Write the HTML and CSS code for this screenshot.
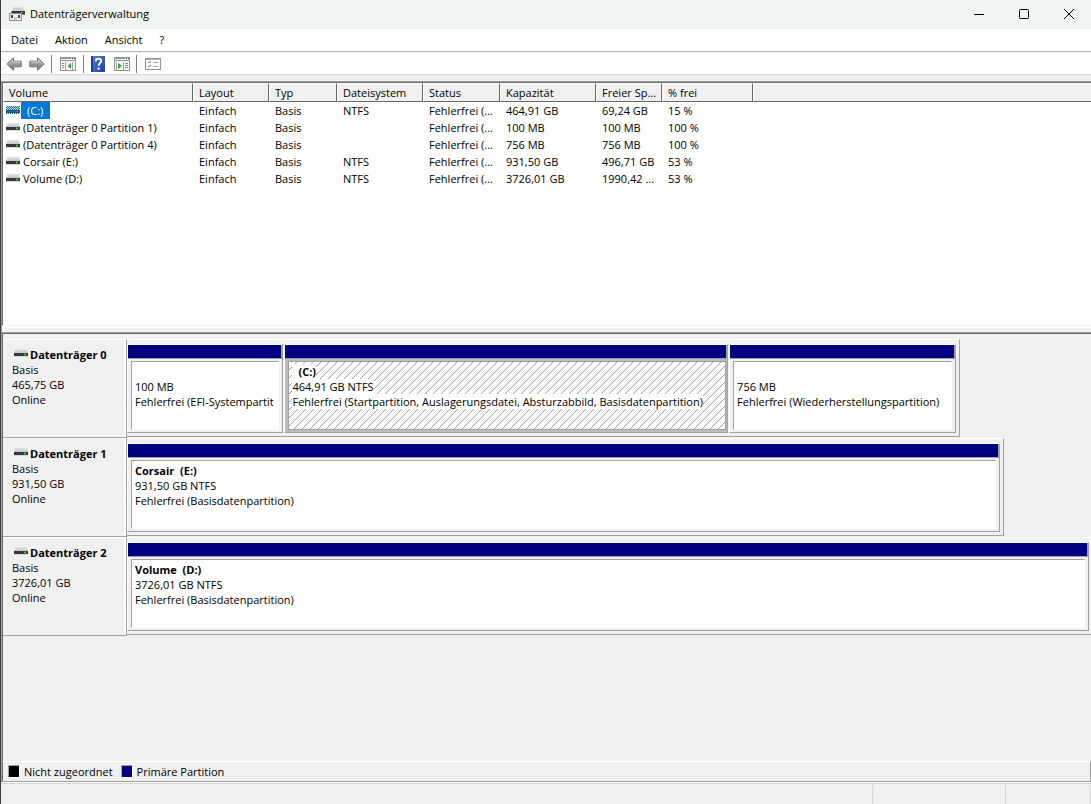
FILE: index.html
```html
<!DOCTYPE html>
<html lang="de">
<head>
<meta charset="utf-8">
<title>Datenträgerverwaltung</title>
<link rel="stylesheet" href="styles.css">
</head>
<body>
<svg class="defs" aria-hidden="true">
  <defs>
    <linearGradient id="lid" x1="0" y1="0" x2="0" y2="1"><stop offset="0" stop-color="#e2e4e6"/><stop offset="1" stop-color="#c3c6c9"/></linearGradient>
    <linearGradient id="arrow-fill" x1="0" y1="0" x2="0" y2="1"><stop offset="0" stop-color="#bdbdbd"/><stop offset="1" stop-color="#777"/></linearGradient>
    <linearGradient id="help-fill" x1="0" y1="0" x2="1" y2="1"><stop offset="0" stop-color="#5f7fdc"/><stop offset="1" stop-color="#1c3fa8"/></linearGradient>
    <symbol id="drive" viewBox="0 0 14 9"><path d="M1 0h12l1 4H0z" fill="url(#lid)"/><path d="M0 4h14v3H0z" fill="#36393b"/><path d="M0 7h14v1H0z" fill="#dadada"/><path d="M10 4h2v3h-2z" fill="#1d7a2c"/><path d="M10 5h2v1h-2z" fill="#2fe04a"/></symbol>
    <symbol id="drive-selected" viewBox="0 0 14 9"><g shape-rendering="crispEdges"><path d="M1 0h12v4H1z" fill="#c8d6e2"/><path d="M0 4h14v3H0z" fill="#30383f"/><path d="M10 5h2v1h-2z" fill="#2fc070"/><path d="M1 .5h13M0 1.500h13M1 2.500h13M0 3.500h13M1 4.500h13M0 5.500h13M1 6.500h13M0 7.500h13" stroke="#0078d7" stroke-dasharray="1 1"/></g></symbol>
    <symbol id="arrow" viewBox="0 0 16 14"><path d="M.8 7 7.500.8v3.400h7.700v5.600H7.500v3.400z" fill="url(#arrow-fill)" stroke="#747474"/><path d="M2.500 7 6.500 3.200v2h7.700" fill="none" stroke="#d2d2d2"/></symbol>
  </defs>
</svg>
<div class="window">
  <header class="titlebar">
    <svg class="app-icon" viewBox="0 0 16 14"><path d="M4 .5h10L15.500 4H2.500z" fill="#cfd2d4"/><path d="M2.500 4H16v3.500H2.500z" fill="#333"/><path d="M12 5h2v1h-2z" fill="#35d04d"/><path d="M.5 6.500h12v7H.5z" fill="#ececec" stroke="#8f8f8f"/><path d="M2 8h2v3H2zM9 8h2v3H9z" fill="#444"/><path d="M5 10h3v3H5z" fill="#d9c9c4"/></svg>
    <h1 class="title">Datenträgerverwaltung</h1>
    <div class="caption-buttons">
      <button class="caption" aria-label="Minimieren"><svg viewBox="0 0 12 12"><path d="M1 6.500h10"/></svg></button>
      <button class="caption" aria-label="Maximieren"><svg viewBox="0 0 12 12"><rect x="1.500" y="1.500" width="9" height="9" rx="1"/></svg></button>
      <button class="caption" aria-label="Schließen"><svg viewBox="0 0 12 12"><path d="m1 1 10 10M11 1 1 11"/></svg></button>
    </div>
  </header>
  <nav class="menubar">
    <button class="menu">Datei</button><button class="menu">Aktion</button><button class="menu">Ansicht</button><button class="menu">?</button>
  </nav>
  <div class="toolbar" role="toolbar">
    <button class="tool nav" aria-label="Zurück"><svg class="ic-arrow"><use href="#arrow"/></svg></button>
    <button class="tool nav" aria-label="Vor"><svg class="ic-arrow forward"><use href="#arrow"/></svg></button>
    <span class="tool-sep"></span>
    <button class="tool wide" aria-label="Konsolenstruktur einblenden"><svg class="ic" viewBox="0 0 16 14"><rect x=".5" y=".5" width="15" height="13" fill="#f7f7f7" stroke="#8c949c"/><path d="M1 1.500h10M1 3.500h14" stroke="#8c949c"/><path d="M12 1h1v1h-1zM14 1h1v1h-1z" fill="#444"/><path d="M5.500 5v8M12.500 5v8" stroke="#9aa2aa"/><path d="M2 6.500h2M2 8.500h2M2 10.500h2" stroke="#7f8891"/><path d="M11 6v6L7.500 9z" fill="#3aa336"/></svg></button>
    <span class="tool-sep"></span>
    <button class="tool" aria-label="Hilfe"><svg class="ic-help" viewBox="0 0 14 16"><rect width="14" height="16" fill="url(#help-fill)"/><path d="M0 0h2v16H0z" fill="#24429c"/><path d="M4.800 5.200C4.800 3.500 6 2.700 7.500 2.700s2.700.9 2.700 2.300C10.200 7 7.700 7.100 7.700 9.800" fill="none" stroke="#fff" stroke-width="1.800"/><circle cx="7.700" cy="12.600" r="1.200" fill="#fff"/></svg></button>
    <button class="tool" aria-label="Aktionsbereich einblenden"><svg class="ic" viewBox="0 0 16 14"><rect x=".5" y=".5" width="15" height="13" fill="#f7f7f7" stroke="#8c949c"/><path d="M1 1.500h10M1 3.500h14" stroke="#8c949c"/><path d="M12 1h1v1h-1zM14 1h1v1h-1z" fill="#444"/><path d="M2.500 5v8M9.500 5v8" stroke="#9aa2aa"/><path d="M11 6.500h3M11 8.500h3M11 10.500h3" stroke="#7f8891"/><path d="M4 6v6l4-3z" fill="#3aa336"/></svg></button>
    <span class="tool-sep"></span>
    <button class="tool wide" aria-label="Einstellungen"><svg class="ic list" viewBox="0 0 16 12"><rect x=".5" y=".5" width="15" height="11" fill="#fbfbfb" stroke="#8c949c"/><path d="M1 1.500h14" stroke="#b5bbc1"/><path d="m3 4 1 1 2-2M3 8l1 1 2-2" fill="none" stroke="#3b8fd0"/><path d="M8 4.500h5M8 8.500h5" stroke="#a5abb1"/></svg></button>
  </div>
  <main class="content">
    <section class="volumes">
      <table class="volume-table">
        <colgroup><col class="c-vol"><col class="c-layout"><col class="c-type"><col class="c-fs"><col class="c-status"><col class="c-cap"><col class="c-free"><col class="c-pct"><col></colgroup>
        <thead><tr><th>Volume</th><th>Layout</th><th>Typ</th><th>Dateisystem</th><th>Status</th><th>Kapazität</th><th>Freier Sp...</th><th>% frei</th><th></th></tr></thead>
        <tbody>
          <tr><td><span class="vol"><svg class="drive"><use href="#drive-selected"/></svg><span class="selected">(C:)</span></span></td><td>Einfach</td><td>Basis</td><td>NTFS</td><td>Fehlerfrei (...</td><td>464,91 GB</td><td>69,24 GB</td><td>15 %</td><td></td></tr>
          <tr><td><span class="vol"><svg class="drive"><use href="#drive"/></svg><span>(Datenträger 0 Partition 1)</span></span></td><td>Einfach</td><td>Basis</td><td></td><td>Fehlerfrei (...</td><td>100 MB</td><td>100 MB</td><td>100 %</td><td></td></tr>
          <tr><td><span class="vol"><svg class="drive"><use href="#drive"/></svg><span>(Datenträger 0 Partition 4)</span></span></td><td>Einfach</td><td>Basis</td><td></td><td>Fehlerfrei (...</td><td>756 MB</td><td>756 MB</td><td>100 %</td><td></td></tr>
          <tr><td><span class="vol"><svg class="drive"><use href="#drive"/></svg><span>Corsair (E:)</span></span></td><td>Einfach</td><td>Basis</td><td>NTFS</td><td>Fehlerfrei (...</td><td>931,50 GB</td><td>496,71 GB</td><td>53 %</td><td></td></tr>
          <tr><td><span class="vol"><svg class="drive"><use href="#drive"/></svg><span>Volume (D:)</span></span></td><td>Einfach</td><td>Basis</td><td>NTFS</td><td>Fehlerfrei (...</td><td>3726,01 GB</td><td>1990,42 ...</td><td>53 %</td><td></td></tr>
        </tbody>
      </table>
    </section>
    <div class="splitter"></div>
    <section class="disks">
      <article class="disk">
        <div class="disk-label"><h2><svg class="drive"><use href="#drive"/></svg>Datenträger 0</h2><p>Basis</p><p>465,75 GB</p><p>Online</p></div>
        <div class="track"><div class="frame" style="width:86.4%">
          <div class="partition" style="flex-grow:156"><div class="bar"></div><div class="body"><div class="box"><p>&nbsp;</p><p>100 MB</p><p>Fehlerfrei (EFI-Systempartit</p></div></div></div>
          <div class="partition active" style="flex-grow:446"><div class="bar"></div><div class="body"><div class="box"><p><b class="lead">(C:)</b></p><p><span>464,91 GB NTFS</span></p><p><span>Fehlerfrei (Startpartition, Auslagerungsdatei, Absturzabbild, Basisdatenpartition)</span></p></div></div></div>
          <div class="partition" style="flex-grow:227"><div class="bar"></div><div class="body"><div class="box"><p>&nbsp;</p><p>756 MB</p><p>Fehlerfrei (Wiederherstellungspartition)</p></div></div></div>
        </div></div>
      </article>
      <article class="disk">
        <div class="disk-label"><h2><svg class="drive"><use href="#drive"/></svg>Datenträger 1</h2><p>Basis</p><p>931,50 GB</p><p>Online</p></div>
        <div class="track"><div class="frame" style="width:91%">
          <div class="partition" style="flex-grow:1"><div class="bar"></div><div class="body"><div class="box"><p><b>Corsair &nbsp;(E:)</b></p><p>931,50 GB NTFS</p><p>Fehlerfrei (Basisdatenpartition)</p></div></div></div>
        </div></div>
      </article>
      <article class="disk">
        <div class="disk-label"><h2><svg class="drive"><use href="#drive"/></svg>Datenträger 2</h2><p>Basis</p><p>3726,01 GB</p><p>Online</p></div>
        <div class="track"><div class="frame" style="width:100.2%">
          <div class="partition" style="flex-grow:1"><div class="bar"></div><div class="body"><div class="box"><p><b>Volume &nbsp;(D:)</b></p><p>3726,01 GB NTFS</p><p>Fehlerfrei (Basisdatenpartition)</p></div></div></div>
        </div></div>
      </article>
    </section>
    <div class="legend"><span class="key"><i class="swatch unallocated"></i>Nicht zugeordnet</span><span class="key"><i class="swatch primary"></i>Primäre Partition</span></div>
  </main>
  <footer class="statusbar"><span class="pane fill"></span><span class="pane mid"></span><span class="pane end"></span></footer>
</div>
</body>
</html>
```
FILE: styles.css
```css
* { box-sizing: border-box; }
html, body { height: 100%; }
body { margin: 0; font: 11px/15px "Open Sans", "Noto Sans", sans-serif; color: #000; background: #f0f0f0; }
h1, h2, p { margin: 0; font-size: inherit; }
button { font: inherit; color: inherit; background: none; border: 0; padding: 0; }
svg { display: block; }
.defs { position: absolute; width: 0; height: 0; }

.window { display: flex; flex-direction: column; height: 100vh; min-height: 720px; border-left: 1px solid #3c3c3c; overflow: hidden; }

.titlebar { display: flex; align-items: center; height: 29px; flex: none; padding: 0 0 2px 8px; background: #eff4f1; }
.app-icon { width: 16px; height: 14px; }
.title { margin-left: 5px; font-weight: 400; }
.caption-buttons { display: flex; margin-left: auto; }
.caption { display: grid; place-items: center; width: 45px; height: 26px; }
.caption svg { width: 12px; height: 12px; fill: none; stroke: #000; }

.menubar { display: flex; gap: 1px; flex: none; height: 23px; padding: 0 0 2px 2px; background: #fff; border-bottom: 1px solid #b0b0b4; }
.menu { padding: 0 8px; }

.toolbar { display: flex; align-items: center; flex: none; height: 23px; padding: 2px 0 0 2px; background: #fff; border-bottom: 1px solid #dcdcdc; }
.tool { display: grid; place-items: center; width: 24px; height: 20px; }
.tool.nav { width: 22px; margin-right: 1px; }
.tool.wide { width: 27px; }
.ic-arrow { width: 16px; height: 14px; }
.forward { transform: scaleX(-1); }
.ic { width: 16px; height: 14px; }
.ic.list { height: 12px; }
.ic-help { width: 14px; height: 16px; }
.tool-sep { width: 1px; height: 18px; margin: 0 2px; background: #808080; }

.content { display: flex; flex-direction: column; flex: 1; min-height: 0; margin-top: 6px; border: solid #a0a0a0; border-width: 1px 0 1px 1px; }
.volumes { flex: 0 0 244px; background: #fff; border-top: 1px solid #696969; border-left: 1px solid #696969; border-bottom: 1px solid #f0f0f0; overflow: hidden; }
.volume-table { width: 100%; border-collapse: separate; border-spacing: 0; table-layout: fixed; }
.c-vol { width: 190px; }
.c-layout { width: 76px; }
.c-type { width: 68px; }
.c-fs { width: 86px; }
.c-status { width: 77px; }
.c-cap { width: 96px; }
.c-free { width: 66px; }
.c-pct { width: 91px; }
th { height: 19px; padding: 0 0 0 5px; text-align: left; font-weight: 400; background: #f0f0f0; border: 1px solid; border-color: #fff #696969 #696969 #fff; }
th:last-child { border-right: 0; }
td { height: 17px; padding: 0 0 0 6px; }
th, td { white-space: nowrap; overflow: hidden; }
td:first-child { padding-left: 3px; }
.vol { display: flex; align-items: center; gap: 3px; }
.drive { width: 14px; height: 9px; flex: none; }
.selected { margin-left: -2px; padding: 1px 7px 1px 6px; background: #0078d7; color: #fff; }

.splitter { flex: none; height: 8px; background: #f0f0f0; border-bottom: 1px solid #696969; box-shadow: inset 0 2px #fff, inset 0 -1px #a0a0a0; }

.disks { flex: 1; min-height: 0; padding-top: 5px; border-left: 1px solid #696969; overflow: hidden; }
.disk { display: flex; height: 99px; }
.disk-label { width: 124px; flex: none; padding: 7px 0 0 9px; border: solid; border-width: 1px 1px 1px 0; border-color: #fff #a0a0a0 #a0a0a0; box-shadow: inset -2px 0 #fff; }
.disk-label h2 { display: flex; gap: 2px; padding: 0 0 0 2px; }
.disk-label .drive { margin-top: 2px; }
.track { flex: 1; min-width: 0; }
.frame { display: flex; gap: 1px; height: 98px; padding: 4px 3px 3px 0; border: solid; border-width: 1px 1px 1px 0; border-color: #fff #a0a0a0 #a0a0a0; }
.partition { display: flex; flex-direction: column; flex: 1 1 0; min-width: 0; border: 1px solid #a0a0a0; border-left-color: #fff; border-top-color: #fff; }
.bar { height: 13px; background: #000080; border-right: 1px solid #a0a0a0; }
.body { flex: 1; padding: 2px 3px; border-top: 1px solid #a0a0a0; }
.box { height: 100%; padding: 2px 2px 0 3px; background: #fff; border: 1px solid #a0a0a0; border-right-color: #fff; border-bottom-color: #fff; white-space: nowrap; overflow: hidden; }
.active .body { background: #bcbcbc; padding-right: 1px; }
.active .box { border-color: #a0a0a0; background-image: url("data:image/svg+xml,%3Csvg xmlns='http://www.w3.org/2000/svg' width='8' height='8'%3E%3Cpath d='M0 7h1v1H0zM1 6h1v1H1zM2 5h1v1H2zM3 4h1v1H3zM4 3h1v1H4zM5 2h1v1H5zM6 1h1v1H6zM7 0h1v1H7z' fill='%23a0a0a0'/%3E%3C/svg%3E"); }
.active span, .active b { display: block; width: fit-content; background: #fff; }
.active .lead { padding-left: 6px; }

.legend { display: flex; align-items: center; gap: 8px; flex: none; height: 20px; padding-left: 5px; border: solid #696969; border-width: 1px 1px 0 1px; border-top-color: #fff; border-right-color: #a0a0a0; }
.key { display: flex; align-items: center; gap: 4px; }
.swatch { width: 12px; height: 13px; border: 1px solid #a0a0a0; border-right-color: #fff; border-bottom-color: #fff; }
.unallocated { background: #000; }
.primary { background: #000080; }

.statusbar { display: flex; flex: none; height: 22px; padding-top: 3px; box-shadow: inset 0 1px #fff, inset 0 2px #d7d7d7; }
.pane { border-right: 1px solid #d7d7d7; }
.fill { flex: 1; }
.mid { width: 133px; }
.end { width: 85px; }
```
